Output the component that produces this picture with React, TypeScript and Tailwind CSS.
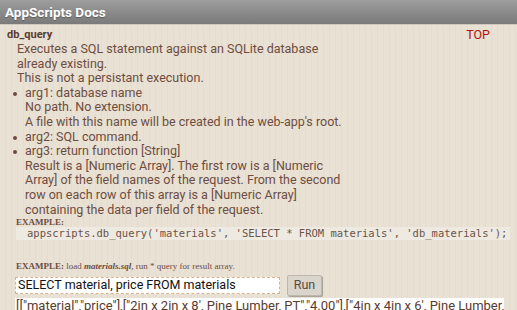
import React from "react";

const bodyFont = { fontFamily: "Roboto, 'Noto Sans', sans-serif" };

function Bullet({ children }: { children: React.ReactNode }) {
  return (
    <div className="flex">
      <span className="w-[12px] shrink-0 pt-[6px]">
        <span className="block h-[4px] w-[4px] rounded-full bg-[#6e4d40]" />
      </span>
      <div>{children}</div>
    </div>
  );
}

export default function App() {
  return (
    <div
      className="h-[310px] w-[517px] overflow-hidden bg-[#e7e0d3] bg-[repeating-linear-gradient(90deg,#e8e1d4_0px,#e8e1d4_5px,#e3dccf_5px,#e3dccf_6px)] text-[#6e4d40]"
      style={bodyFont}
    >
      <div className="flex h-[25px] items-center border-b border-[#cfc8bc] bg-gradient-to-b from-[#9d9d9d] to-[#7a7a7a] px-[5px]">
        <h1 className="text-[13.5px] font-bold text-white [text-shadow:0_1px_1px_rgba(0,0,0,0.3)]">
          AppScripts Docs
        </h1>
      </div>

      <div className="px-[7px] pt-[3px]">
        <div className="flex items-start justify-between">
          <h2 className="text-[11px] font-bold leading-[14px] text-[#5a3a2e]">db_query</h2>
          <a className="mr-[20px] text-[12.5px] leading-[14px] text-[#b3110d]">TOP</a>
        </div>

        <div className="pl-[10px] text-[12.5px] leading-[14.6px]">
          <p>Executes a SQL statement against an SQLite database</p>
          <p>already existing.</p>
          <p>This is not a persistant execution.</p>
        </div>

        <div className="pl-[6px] text-[12.5px] leading-[14.6px]">
          <Bullet>
            <p>arg1: database name</p>
            <p>No path. No extension.</p>
            <p>A file with this name will be created in the web-app's root.</p>
          </Bullet>
          <Bullet>
            <p>arg2: SQL command.</p>
          </Bullet>
          <Bullet>
            <p>arg3: return function [String]</p>
            <p>Result is a [Numeric Array]. The first row is a [Numeric</p>
            <p>Array] of the field names of the request. From the second</p>
            <p>row on each row of this array is a [Numeric Array]</p>
            <p>containing the data per field of the request.</p>
          </Bullet>
        </div>

        <div className="pl-[9px] font-['Liberation_Serif',serif] text-[9px] font-bold leading-[10px] text-[#6e4d40]">
          EXAMPLE:
        </div>
        <pre className="ml-[9px] bg-[#eee9e1] pl-[11px] font-['DejaVu_Sans_Mono',monospace] text-[10.5px] leading-[13px] text-[#6b5448] whitespace-pre">
          appscripts.db_query('materials', 'SELECT * FROM materials', 'db_materials');
        </pre>

        <div className="mt-[21px] pl-[9px] font-['Liberation_Serif',serif] text-[9px] leading-[10px]">
          <span className="font-bold">EXAMPLE:</span> load{" "}
          <span className="font-bold italic">materials.sql</span>, run * query for result array.
        </div>

        <div className="mt-[4px] flex items-center gap-[7px] pl-[8px]">
          <input
            readOnly
            value="SELECT material, price FROM materials"
            className="h-[17px] w-[265px] border border-dashed border-[#d8b48e] bg-white px-[2px] text-[12.5px] text-[#111] outline-none"
            style={bodyFont}
          />
          <button className="h-[21px] w-[35px] rounded-[2px] border border-[#bdb8ae] bg-[#d9d5cd] text-[12.5px] text-[#5a4a40] shadow-[1px_1px_0_#aaa49a]">
            Run
          </button>
        </div>

        <div className="mt-[2px] ml-[8px] w-[489px] overflow-hidden whitespace-nowrap bg-white pl-[1px] text-[13px] leading-[16px] text-[#5a3a2e]">
          [["material","price"],["2in x 2in x 8', Pine Lumber, PT","4.00"],["4in x 4in x 6', Pine Lumber, PT","9.00"]]
        </div>
      </div>
    </div>
  );
}
